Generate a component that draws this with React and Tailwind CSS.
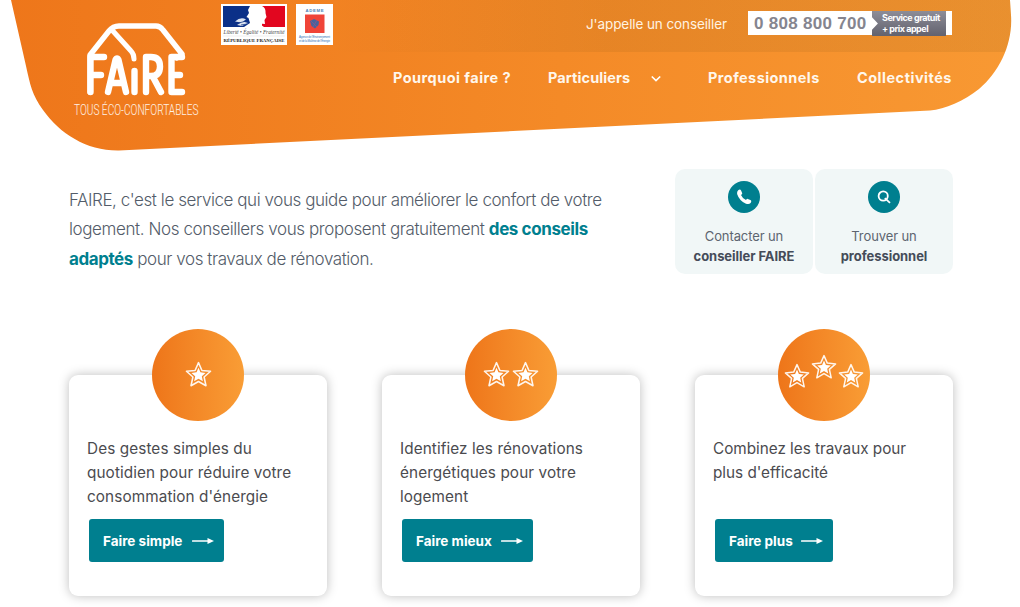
import React from "react";

const STAR = "M13 1.6 L16.3 9.1 L24.6 9.9 L18.4 15.4 L20.2 23.8 L13 19.7 L5.8 23.8 L7.6 15.4 L1.4 9.9 L9.7 9.1 Z";
const STAR_CORE = "M13 6.4 L14.9 10.9 L19.8 11.5 L16.2 14.8 L17.2 19.5 L13 17 L8.8 19.5 L9.8 14.8 L6.2 11.5 L11.1 10.9 Z";

function Star({ className = "-mt-[2px] size-[27px]" }) {
  return (
    <svg viewBox="0 0 26 26" className={className} aria-hidden="true">
      <path d={STAR} fill="none" stroke="#fff" strokeOpacity="0.92" strokeWidth="1.5" strokeLinejoin="round" />
      <path d={STAR_CORE} fill="#fff" />
    </svg>
  );
}

function Arrow() {
  return (
    <svg viewBox="0 0 22 8" className="h-2 w-[22px]" aria-hidden="true">
      <path d="M0.7 4H17" stroke="#fff" strokeWidth="1.7" strokeLinecap="round" />
      <path d="M15.5 0.9L22 4L15.5 7.1Z" fill="#fff" />
    </svg>
  );
}

function HeaderShape() {
  return (
    <svg viewBox="0 0 1020 152" className="absolute inset-0 h-[152px] w-[1020px]" aria-hidden="true">
      <defs>
        <linearGradient id="sun" x1="0" x2="1" y1="0" y2="0">
          <stop offset="0" stopColor="#ee761a" />
          <stop offset="0.55" stopColor="#f48a27" />
          <stop offset="1" stopColor="#f89933" />
        </linearGradient>
        <linearGradient id="shade" x1="0" x2="1" y1="0" y2="0">
          <stop offset="0" stopColor="#302800" stopOpacity="0" />
          <stop offset="0.4" stopColor="#302800" stopOpacity="0.07" />
          <stop offset="1" stopColor="#302800" stopOpacity="0.075" />
        </linearGradient>
        <clipPath id="cap">
          <path d="M11 0 L26 66 C30 84 32 95 43 110 C60 134 87 151 119 150.5 L930 110.5 C945 109 964 101 979 89 C1000 71 1013 43 1011 15 L1010 0 Z" />
        </clipPath>
      </defs>
      <g clipPath="url(#cap)">
        <rect width="1020" height="152" fill="url(#sun)" />
        <rect x="330" width="690" height="52" fill="url(#shade)" />
      </g>
    </svg>
  );
}

function FaireLogo() {
  return (
    <div className="flex w-[126px] flex-col items-center">
      <svg viewBox="0 0 100 76" className="h-[76px] w-[100px]" fill="none" stroke="#fff" strokeWidth="6.4" strokeLinecap="round" strokeLinejoin="round" aria-label="FAIRE">
        <path d="M4 70V33L23 9Q27 4 33 4H70Q74 4 77 8L96 32L91 36" strokeWidth="5.4" />
        <path d="M26 8L45 29Q48 32 48 37" strokeWidth="5" />
        <path d="M4.5 70V35H18M4.5 53H15" />
        <path d="M22 70L29.5 38Q31 35 32.5 38L40 70M26 61H36" />
        <path d="M48.5 49V70" />
        <path d="M60 70V35H65Q74 35 74 44.5T65 54H60M67 55L75 70" />
        <path d="M96 35H85.5V70H96M85.5 53H94" />
      </svg>
      <span className="mt-[3px] block origin-center scale-x-[0.675] whitespace-nowrap font-['Roboto','Liberation_Sans',sans-serif] text-[15px] font-light leading-[18px] text-white/90">TOUS ÉCO-CONFORTABLES</span>
    </div>
  );
}

function RepublicLogo() {
  return (
    <svg viewBox="0 0 66 41" className="h-[41px] w-[66px]" aria-hidden="true">
      <rect width="66" height="41" fill="#fff" />
      <rect x="2" y="2" width="27" height="21" fill="#0b3088" />
      <rect x="41" y="2" width="23" height="21" fill="#e2061f" />
      <path d="M29 2H41Q45 4 44.5 9L45.5 13L43.5 16L44 20L38 19.5L43 23H23L29 19L27.5 14L25.5 13L28 9L27 6Z" fill="#fff" />
      <path d="M14 17.5Q20 12 25 15.5L22 17.5L27 19L21 22L16 21L20 18.5Z" fill="#dce4f1" />
      <path d="M18 19L25 17M20 21L26 20" stroke="#123584" strokeWidth="0.8" />
      <text x="33" y="29.5" textAnchor="middle" fontFamily="Liberation Serif, serif" fontStyle="italic" fontSize="5.2" fill="#444" textLength="61">Liberté • Égalité • Fraternité</text>
      <path d="M2 32H64" stroke="#ddd" strokeWidth="0.5" />
      <text x="33" y="37.8" textAnchor="middle" fontFamily="Liberation Serif, serif" fontWeight="700" fontSize="4.9" fill="#222" textLength="61" lengthAdjust="spacingAndGlyphs">RÉPUBLIQUE FRANÇAISE</text>
    </svg>
  );
}

function AdemeLogo() {
  return (
    <svg viewBox="0 0 37 41" className="h-[41px] w-[37px]" aria-hidden="true">
      <rect width="37" height="41" fill="#fff" />
      <text x="18.5" y="8" textAnchor="middle" fontFamily="Liberation Sans, sans-serif" fontWeight="700" fontSize="4.3" fill="#4d84b8" textLength="18">ADEME</text>
      <rect x="9" y="10.5" width="19.5" height="18.5" fill="#f04438" />
      <path d="M14 17L18 15L23 17.5L22.5 21L19 24.5L15.5 22Z" fill="#47639c" />
      <path d="M15 17L21 23M21 16L17 23" stroke="#89558a" strokeWidth="0.8" />
      <text x="18.5" y="34.2" textAnchor="middle" fontFamily="Liberation Sans, sans-serif" fontSize="2.9" fill="#3a78bb" textLength="31">Agence de l'Environnement</text>
      <text x="18.5" y="38" textAnchor="middle" fontFamily="Liberation Sans, sans-serif" fontSize="2.9" fill="#3a78bb" textLength="31">et de la Maîtrise de l'Énergie</text>
    </svg>
  );
}

function PhoneBadge() {
  return (
    <div className="flex h-6 w-[204px] bg-white pl-[6px] text-[#85858f]">
      <span className="w-[118px] whitespace-nowrap font-['Liberation_Sans',sans-serif] text-[17px] font-bold leading-[25px] tracking-[0.3px]">0 808 800 700</span>
      <span className="h-[25px] w-[74px] bg-linear-to-b from-[#8d8d98] to-[#62626e] pl-[10px] pt-[2px] text-[9px] font-bold leading-[10.5px] text-white [clip-path:polygon(0_0,100%_0,100%_100%,0_100%,0_75%,8%_50%,0_25%)]">
        <span className="block whitespace-nowrap tracking-[-0.47px]">Service gratuit</span>
        <span className="block whitespace-nowrap tracking-[-0.47px]">+ prix appel</span>
      </span>
    </div>
  );
}

function Header() {
  return (
    <header className="relative h-[152px]">
      <HeaderShape />
      <div className="relative flex h-full">
        <div className="ml-[73px] pt-[22px]"><FaireLogo /></div>
        <div className="ml-[22px] flex gap-[9px] pt-1"><RepublicLogo /><AdemeLogo /></div>
        <div className="ml-[60px] w-[567px]">
          <div className="flex h-[52px] w-[559px] justify-end pt-[11px]">
            <span className="mr-[20px] w-[142px] whitespace-nowrap text-[13.5px] leading-[26px] tracking-[-0.1px] text-[#fff3e2]">J'appelle un conseiller</span>
            <PhoneBadge />
          </div>
          <nav className="flex h-[52px] items-center whitespace-nowrap text-[14.5px] font-bold text-[#fff7ec]">
            <a className="w-[155px] tracking-[0.46px]">Pourquoi faire ?</a>
            <a className="flex w-[160px] items-center tracking-[0.1px]">
              <span className="w-[102px]">Particuliers</span>
              <svg viewBox="0 0 12 8" className="mt-[2px] h-2 w-3" fill="none" stroke="#fff" strokeWidth="1.7"><path d="M1.8 1.5L6 5.5L10.2 1.5" /></svg>
            </a>
            <a className="w-[149px] tracking-[0.43px]">Professionnels</a>
            <a className="tracking-[0.5px]">Collectivités</a>
          </nav>
        </div>
      </div>
    </header>
  );
}

function ContactTile({ icon, top, bottom }) {
  return (
    <a className="flex h-[105px] w-[138px] flex-col items-center rounded-[10px] bg-[#f1f7f7] pt-3 text-[13px] leading-5">
      <span className="mb-[13px] flex size-8 items-center justify-center rounded-full bg-[#007f8f] text-white">{icon}</span>
      <span className="whitespace-nowrap tracking-[-0.1px] text-[#5d6570]">{top}</span>
      <span className="whitespace-nowrap font-bold tracking-[-0.05px] text-[#454c59]">{bottom}</span>
    </a>
  );
}

const cards = [
  { lines: ["Des gestes simples du", "quotidien pour réduire votre", "consommation d'énergie"], action: "Faire simple", width: "w-[135px]", tracking: "tracking-[0.1px]", stars: 1 },
  { lines: ["Identifiez les rénovations", "énergétiques pour votre", "logement"], action: "Faire mieux", width: "w-[131px]", tracking: "tracking-[0.1px]", stars: 2 },
  { lines: ["Combinez les travaux pour", "plus d'efficacité"], action: "Faire plus", width: "w-[118px]", tracking: "tracking-[-0.02px]", stars: 3 },
];

function Card({ lines, action, width, tracking, stars }) {
  return (
    <article className="flex h-[221px] w-[258px] flex-col rounded-[9px] bg-white px-[18px] shadow-[0_0_11px_rgba(0,0,0,0.26)]">
      <div className="-mt-[46px] flex size-[92px] shrink-0 items-center justify-center self-center rounded-full bg-linear-to-r from-[#ee7519] to-[#f99d35]">
        {stars === 1 && <Star />}
        {stars === 2 && <div className="flex gap-[2px]"><Star /><Star /></div>}
        {stars === 3 && <div className="flex gap-[1px]"><Star className="mt-[2px] size-[26px]" /><Star className="-mt-[7px] size-[26px]" /><Star className="mt-[2px] size-[26px]" /></div>}
      </div>
      <p className={`mt-4 h-[72px] whitespace-nowrap text-[15.3px] leading-6 text-[#4b4b4f] ${tracking}`}>
        {lines.map((line) => <span key={line} className="block">{line}</span>)}
      </p>
      <a className={`mt-[10px] ml-[2px] flex h-[43px] items-center justify-between rounded-[3px] bg-[#007f8f] pr-[10px] pl-[14px] text-[13.5px] font-bold text-white ${width}`}>
        <span className="whitespace-nowrap">{action}</span><Arrow />
      </a>
    </article>
  );
}

export default function App() {
  return (
    <div className="h-[607px] w-[1020px] overflow-hidden bg-white font-['Inter','Liberation_Sans',sans-serif]">
      <Header />
      <main className="pl-[69px]">
        <section className="flex pt-[17px]">
          <p className="w-[606px] pt-[17px] text-[17px] font-light leading-[29.4px] tracking-[-0.43px] text-[#535c69]">
            <span className="block whitespace-nowrap">FAIRE, c'est le service qui vous guide pour améliorer le confort de votre</span>
            <span className="block whitespace-nowrap tracking-[-0.4px]">logement. Nos conseillers vous proposent gratuitement <b className="font-bold text-[#007f8f]">des conseils</b></span>
            <span className="block whitespace-nowrap"><b className="font-bold text-[#007f8f]">adaptés</b> pour vos travaux de rénovation.</span>
          </p>
          <div className="flex gap-[2px]">
            <ContactTile top="Contacter un" bottom="conseiller FAIRE" icon={<svg viewBox="0 0 16 16" className="size-4"><path d="M2.2 1.2Q4.2-.2 5.2 1.7L6.2 4.2Q6.4 5 5 6Q6.5 9.5 10 11Q11 9.6 11.8 9.9L14.4 11.1Q16 12 14.6 14Q13 15.8 10 14.7Q3.5 12 1.2 5.2Q.7 2.6 2.2 1.2Z" fill="currentColor" /></svg>} />
            <ContactTile top="Trouver un" bottom="professionnel" icon={<svg viewBox="0 0 16 16" className="size-4" fill="none" stroke="currentColor" strokeWidth="1.8"><circle cx="7.2" cy="7" r="4.6" /><path d="M8.8 9.2L14 13.8" /></svg>} />
          </div>
        </section>
        <section className="mt-[101px] flex gap-[55px]">
          {cards.map((card) => <Card key={card.action} {...card} />)}
        </section>
      </main>
    </div>
  );
}
